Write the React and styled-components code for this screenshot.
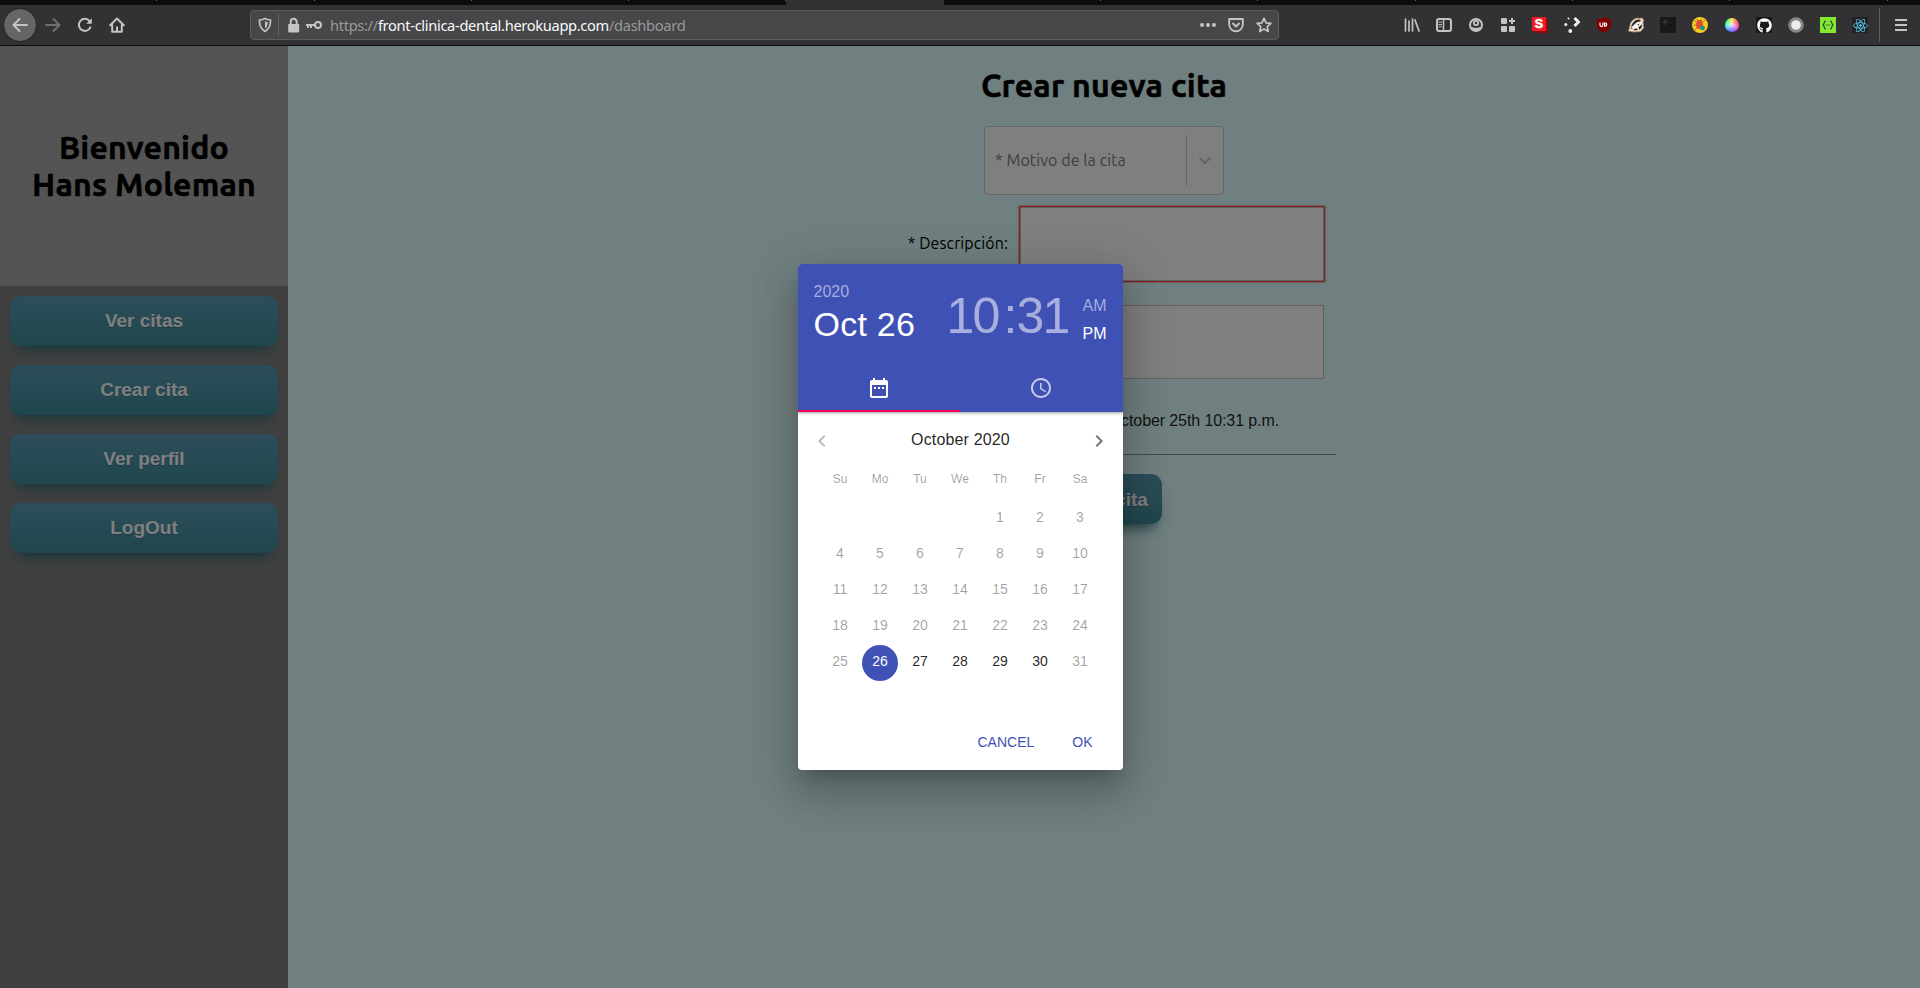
import React from "react";
import styled, { createGlobalStyle } from "styled-components";
import { FaGithub, FaReact } from "react-icons/fa";

const GlobalStyle = createGlobalStyle`
  *, *::before, *::after { box-sizing: border-box; }
  html, body { margin: 0; padding: 0; overflow: hidden; }
  button { border: 0; background: none; padding: 0; font: inherit; color: inherit; }
  svg { display: block; flex: none; }
`;

const ubuntu = `Ubuntu, "Noto Sans", "Open Sans", sans-serif`;
const helvetica = `"Liberation Sans", Arial, sans-serif`;

const Window = styled.div`
  display: flex;
  flex-direction: column;
  width: 1920px;
  height: 988px;
  overflow: hidden;
  font-family: ${ubuntu};
  color: #000;
`;

/* ---------- browser chrome ---------- */

const TabStrip = styled.div`
  display: flex;
  height: 5px;
  flex: none;
  background: #0c0c0d;
`;

const TabEdge = styled.div`
  width: 157.3px;
  flex: none;
  height: ${(p) => (p.$active ? 5 : 1)}px;
  background: ${(p) => (p.$active ? "#323234" : "transparent")};
  border-right: 1px solid ${(p) => (p.$active ? "#323234" : "#68686a")};
`;

const Toolbar = styled.div`
  display: flex;
  align-items: center;
  height: 41px;
  flex: none;
  background: #323234;
  border-bottom: 1px solid #0c0c0d;
  color: #c4c4c5;
`;

const NavGroup = styled.div`
  display: flex;
  width: 250px;
  padding-left: 4px;
`;

const NavButton = styled.button`
  display: grid;
  place-items: center;
  width: 32px;
  height: 32px;
  border-radius: 50%;
  background: ${(p) => (p.$filled ? "#666667" : "transparent")};
  color: ${(p) => (p.$dim ? "#707072" : "inherit")};
  outline: ${(p) => (p.$filled ? "1px solid #28282a" : "none")};
  margin-left: ${(p) => p.$gap || 0}px;
`;

const UrlBar = styled.div`
  display: flex;
  align-items: center;
  width: 1029px;
  height: 30px;
  padding: 0 6px;
  border: 1px solid #5c5c5e;
  border-radius: 4px;
  background: #474749;
`;

const UrlDivider = styled.span`
  width: 1px;
  height: 22px;
  margin: 0 6px 0 5px;
  background: #636365;
`;

const Url = styled.span`
  flex: 1;
  margin-left: 7px;
  font: 14.67px/20px "Noto Sans", sans-serif;
  letter-spacing: -0.33px;
  padding-bottom: 1px;
  color: #99999b;
  b { color: #f9f9fa; font-weight: 400; }
`;

const UrlActions = styled.div`
  display: flex;
  gap: 12px;
`;

const Extensions = styled.div`
  display: flex;
  gap: 16px;
  margin-left: auto;
  margin-right: 11px;
`;

const Extension = styled.span`
  display: grid;
  place-items: center;
  width: 16px;
  height: 16px;
  background: ${(p) => p.$bg || "transparent"};
  border-radius: ${(p) => p.$r || 0};
`;

const MenuArea = styled.div`
  display: flex;
  align-items: center;
  width: 41px;
  height: 34px;
  padding-left: 15px;
  border-left: 1px solid #5c5c5e;
`;

const KeyIcon = styled.svg`
  margin-left: 4px;
`;

const BadgeLetter = styled.text`
  font: 700 12.5px "Liberation Sans", sans-serif;
  fill: #fff;
  stroke: #fff;
  stroke-width: 0.5px;
  text-anchor: middle;
`;

function Glyph({ size = 16, children }) {
  return (
    <svg width={size} height={size} viewBox="0 0 16 16" fill="none" stroke="currentColor" strokeWidth="2" strokeLinecap="round" strokeLinejoin="round">
      {children}
    </svg>
  );
}

function BrowserChrome() {
  return (
    <>
      <TabStrip>
        {Array.from({ length: 12 }, (_, i) => (
          <TabEdge key={i} $active={i === 5} />
        ))}
      </TabStrip>
      <Toolbar>
        <NavGroup>
          <NavButton $filled>
            <Glyph><path d="M15 8H1.6M7.5 2L1.5 8l6 6" /></Glyph>
          </NavButton>
          <NavButton $dim $gap={1}>
            <Glyph><path d="M1 8h13.4M8.5 2l6 6-6 6" /></Glyph>
          </NavButton>
          <NavButton>
            <Glyph><path d="M13.4 10.3A6 6 0 1 1 12.5 4" /><path d="M14.8 1.2v5.6H9.2l5.6-5.6z" fill="currentColor" stroke="none" /></Glyph>
          </NavButton>
          <NavButton>
            <Glyph><path d="M1.2 8.3L8 1.5l6.8 6.8M3.2 8v6.8h9.6V8M8 11v3.5" /><path d="M7 9.5h2V15H7z" fill="currentColor" stroke="none" /></Glyph>
          </NavButton>
        </NavGroup>
        <UrlBar>
          <Glyph>
            <path d="M8 1.6c1.8 1 3.7 1.3 5.6 1.4 0 5.500-1.200 9-5.600 11.400C3.600 12 2.400 8.500 2.400 3c1.900-.1 3.800-.4 5.600-1.400z" strokeWidth="1.700" />
            <path d="M8 4.300v7.400c2-1.600 2.600-3.600 2.800-6.500A9 9 0 0 1 8 4.300z" fill="currentColor" stroke="none" />
          </Glyph>
          <UrlDivider />
          <Glyph>
            <rect x="3.200" y="7" width="11" height="8.500" rx="1" fill="currentColor" stroke="none" />
            <path d="M5.700 8V4.800a3 3 0 0 1 6 0V8" strokeLinecap="butt" />
          </Glyph>
          <KeyIcon width="18" height="16" viewBox="0 0 18 16" fill="none" stroke="currentColor" strokeWidth="2">
            <circle cx="13" cy="8" r="3" />
            <path d="M10 8H1M3 8v3M6 8v3" />
          </KeyIcon>
          <Url>https://<b>front-clinica-dental.herokuapp.com</b>/dashboard</Url>
          <UrlActions>
            <Glyph><g fill="currentColor" stroke="none"><circle cx="2" cy="8" r="2" /><circle cx="8" cy="8" r="2" /><circle cx="14" cy="8" r="2" /></g></Glyph>
            <Glyph><path d="M1.200 2h13.600v5.500a6.800 6.800 0 0 1-13.600 0z" strokeWidth="1.900" /><path d="M5 6.500l3 3 3-3" /></Glyph>
            <Glyph><path d="M8 1.300l2 4.500 4.900.5-3.700 3.300 1.100 4.900L8 12l-4.300 2.500 1.100-4.900L1.100 6.300 6 5.800z" strokeWidth="1.700" /></Glyph>
          </UrlActions>
        </UrlBar>
        <Extensions>
          <Extension><Glyph><path d="M1.500 2v12M5 4v10M8.500 2v12M11 3l4 11" strokeWidth="1.700" /></Glyph></Extension>
          <Extension><Glyph><rect x="1" y="2" width="14" height="12" rx="2" /><path d="M7.500 2v12" strokeWidth="1.500" /><path d="M3 5.200h2.500M3 7.500h2.500M3 9.800h2.500" strokeWidth="1" /></Glyph></Extension>
          <Extension><Glyph><circle cx="8" cy="8" r="6" /><circle cx="8" cy="6" r="2.200" strokeWidth="1.800" /><path d="M3.500 9.200c1.500 2.300 7.500 2.300 9 0-.5 5.800-8.500 5.800-9 0z" fill="currentColor" stroke="none" /></Glyph></Extension>
          <Extension><Glyph><g fill="currentColor" stroke="none"><rect x="1" y="1" width="6" height="6" rx="1" /><rect x="1" y="9" width="6" height="6" rx="1" /><rect x="9" y="9" width="6" height="6" rx="1" /></g><path d="M12 1v6M9 4h6" strokeLinecap="butt" /></Glyph></Extension>
          <Extension>
            <svg width="16" height="16" viewBox="0 0 16 16">
              <path d="M2 2h14v14H3l-2-2z" fill="#8f0a12" /><path d="M0 0h14v14H0z" fill="#ed1c24" />
              <BadgeLetter x="7" y="11.200">S</BadgeLetter>
            </svg>
          </Extension>
          <Extension>
            <svg width="16" height="16" viewBox="0 0 16 16" fill="#f2f2f2">
              <circle cx="4.500" cy="1.500" r="1" /><circle cx="1.800" cy="7.500" r="1.500" /><circle cx="6.300" cy="14" r="1.900" />
              <path d="M10.500 1l4 4-4 4" fill="none" stroke="#f2f2f2" strokeWidth="3" />
            </svg>
          </Extension>
          <Extension>
            <svg width="16" height="16" viewBox="0 0 16 16">
              <path d="M8 0c2 1.400 4 1.800 7 2v5c0 4.500-2 6.500-7 9-5-2.500-7-4.500-7-9V2c3-.2 5-.6 7-2z" fill="#800000" />
              <path d="M4 5.500v2.600a1.300 1.300 0 0 0 2.900 0V5.500M8.600 6v3.100h.9a1.600 1.600 0 0 0 0-3.100z" fill="none" stroke="#fff" strokeWidth="1.200" />
            </svg>
          </Extension>
          <Extension>
            <svg width="16" height="16" viewBox="0 0 16 16">
              <path d="M.5 14l1-3 1-5 3-3.500 3.500-1.500 2 .5 3-.5 1.500 2-.5 3 .5 5-3 3.500L6 15z" fill="#efe0d2" stroke="#c08a5e" strokeWidth=".8" />
              <path d="M4 7l3-3.500 3-1 3 .5-1 1.500-3 .5-3 2.500-3 3zM10.500 10l3.500-2.500-.5 3-2 2.500zM5 13l3-1.500 2 .5-2 1.500zM2.500 12l1-1.500 1 1z" fill="#242424" />
              <path d="M4.500 11l5-4.500L13 5.500 11.500 9 7 11z" fill="#fff" />
              <path d="M9 8l2.500-1.400-.8 2z" fill="#242424" />
            </svg>
          </Extension>
          <Extension $bg="#19191a" $r="1px"><Glyph><path d="M5 2.500v5M2.500 5h5" stroke="#343436" strokeWidth="1.500" /></Glyph></Extension>
          <Extension>
            <svg width="16" height="16" viewBox="0 0 16 16">
              <circle cx="8" cy="8" r="8" fill="#f8ca20" />
              <path d="M4 5L2.500 3.500M4 8H2M5 11l-2 2M11 5l2-2M6 4L5 2M9 4l1-2" stroke="#9a6a22" strokeWidth=".9" />
              <ellipse cx="7.500" cy="7.500" rx="3.500" ry="4.500" fill="#e14a35" />
              <circle cx="10.500" cy="11" r="2.400" fill="#199a7c" />
            </svg>
          </Extension>
          <Extension><ColorWheel /></Extension>
          <Extension $bg="#18181a"><FaGithub size={15} color="#fff" /></Extension>
          <Extension><Glyph><circle cx="8" cy="8" r="6.300" fill="#ececec" stroke="#858585" strokeWidth="2.900" /></Glyph></Extension>
          <Extension $bg="#85ea2d">
            <Glyph><path d="M5.500 4C3.800 4 4.600 7.500 3 8c1.600.5.800 4 2.500 4M10.500 4c1.700 0 .9 3.500 2.500 4-1.600.5-.8 4-2.500 4M6.300 8h.1M8 8h.1M9.700 8h.1" stroke="#173647" strokeWidth="1.100" /></Glyph>
          </Extension>
          <Extension $bg="#20232a"><FaReact size={15} color="#5fd3f3" /></Extension>
        </Extensions>
        <MenuArea>
          <svg width="12" height="14" viewBox="0 0 12 14" stroke="currentColor" strokeWidth="2"><path d="M0 2h12M0 7h12M0 12h12" /></svg>
        </MenuArea>
      </Toolbar>
    </>
  );
}

const ColorWheel = styled.i`
  width: 14px;
  height: 14px;
  border-radius: 50%;
  background: radial-gradient(circle, #fffc 0, #fff0 65%),
    conic-gradient(#f8e34d, #ff5a4d, #ff4db8, #a04dff, #4d7cff, #4de6ff, #4dff6a, #f8e34d);
`;

/* ---------- dashboard page ---------- */

const Page = styled.div`
  position: relative;
  display: flex;
  flex: 1;
  background: #e0ffff;
`;

const Sidebar = styled.aside`
  width: 288px;
  background: #808080;
`;

const Welcome = styled.header`
  display: flex;
  align-items: center;
  justify-content: center;
  height: 240px;
  background: #a9a9a9;
`;

const Heading = styled.h1`
  margin: 0;
  font: 700 32px/37px ${ubuntu};
  letter-spacing: 0.2px;
  -webkit-text-stroke: 0.5px #000;
  text-align: center;
`;

const Menu = styled.nav`
  display: flex;
  flex-direction: column;
  gap: 19px;
  padding: 10px;
`;

const ActionButton = styled.button`
  height: 50px;
  padding: 0 14px;
  border-radius: 11px;
  background: linear-gradient(to bottom, #599bb3 5%, #408c99 100%);
  box-shadow: 0 10px 14px -7px #276873;
  color: #fff;
  font: 700 19px/24px ${helvetica};
  text-shadow: 0 1px 0 #3d768a;
  white-space: nowrap;
`;

const SubmitButton = styled(ActionButton)`
  margin-top: 19px;
  padding-top: 1px;
`;

const Main = styled.main`
  display: flex;
  flex: 1;
  flex-direction: column;
  align-items: center;
  padding-top: 21px;
`;

const Select = styled.div`
  display: flex;
  align-items: center;
  width: 240px;
  height: 69px;
  margin-top: 22px;
  padding-left: 10px;
  border: 1px solid #ccc;
  border-radius: 4px;
  background: #fff;
  color: #808080;
  font-size: 16px;
`;

const SelectText = styled.span`
  flex: 1;
  padding-bottom: 2px;
  letter-spacing: 0.08px;
`;

const SelectArrow = styled.span`
  display: grid;
  place-items: center;
  width: 37px;
  height: 51px;
  border-left: 1px solid #ccc;
  padding-bottom: 1px;
  color: #ccc;
`;

const Fields = styled.div`
  width: 464px;
  display: flex;
  flex-direction: column;
  align-items: center;
`;

const FieldRow = styled.div`
  display: flex;
  align-items: center;
  justify-content: flex-end;
  gap: 12px;
  width: 100%;
  margin-top: ${(p) => p.$top}px;
  padding-right: ${(p) => p.$inset}px;
`;

const Label = styled.label`
  padding-bottom: 2px;
  font-size: 16px;
  line-height: 20px;
  letter-spacing: 0.1px;
  white-space: nowrap;
`;

const TextBox = styled.textarea`
  display: block;
  width: 304px;
  height: 74px;
  border: 1px solid #ccc0b8;
  background: #fff;
  resize: none;
  outline: 0;
  box-shadow: ${(p) => (p.$invalid ? "0 0 1.5px 1px #f00" : "none")};
`;

const DateField = styled.div`
  width: 100%;
  height: 45px;
  margin-top: 31px;
  padding: 1px 57px 0 0;
  border-bottom: 1px solid rgba(0, 0, 0, 0.42);
  color: rgba(0, 0, 0, 0.87);
  font: 16px/19px ${helvetica};
  letter-spacing: -0.1px;
  text-align: right;
`;

/* ---------- date and time dialog ---------- */

const Backdrop = styled.div`
  position: absolute;
  inset: 0;
  display: grid;
  place-items: center;
  background: rgba(0, 0, 0, 0.5);
`;

const Dialog = styled.section`
  display: flex;
  flex-direction: column;
  width: 325px;
  height: 506px;
  border-radius: 4px;
  overflow: hidden;
  background: #fff;
  font-family: ${helvetica};
  box-shadow: 0 11px 15px -7px rgba(0, 0, 0, 0.2), 0 24px 38px 3px rgba(0, 0, 0, 0.14),
    0 9px 46px 8px rgba(0, 0, 0, 0.12);
`;

const DialogTop = styled.header`
  height: 148px;
  flex: none;
  background: #3f51b5;
  color: #fff;
  box-shadow: 0 1px 3px rgba(0, 0, 0, 0.4);
`;

const Summary = styled.div`
  display: flex;
  justify-content: space-between;
  height: 100px;
  padding: 16px 16px 0;
`;

const DateSummary = styled.div`
  display: flex;
  flex-direction: column;
`;

const Year = styled.span`
  font-size: 16px;
  line-height: 24px;
  color: rgba(255, 255, 255, 0.54);
`;

const DayTitle = styled.span`
  font-size: 34px;
  line-height: 40px;
  letter-spacing: 0.25px;
`;

const TimeSummary = styled.div`
  display: flex;
  align-items: flex-start;
`;

const Time = styled.span`
  display: flex;
  font-size: 50px;
  line-height: 50px;
  letter-spacing: -1.8px;
  margin-top: 11px;
  color: rgba(255, 255, 255, 0.54);
  i { font-style: normal; margin: 0 1px 0 5px; }
`;

const Meridiem = styled.div`
  display: flex;
  flex-direction: column;
  margin: 12px 0 0 14px;
  font-size: 16px;
  line-height: 28px;
`;

const MeridiemLabel = styled.span`
  color: ${(p) => (p.$on ? "#fff" : "rgba(255, 255, 255, 0.54)")};
`;

const Tabs = styled.div`
  display: flex;
  height: 48px;
`;

const Tab = styled.button`
  display: grid;
  place-items: center;
  flex: 1;
  padding-top: 2px;
  border-bottom: 2px solid ${(p) => (p.$on ? "#f50057" : "transparent")};
  color: ${(p) => (p.$on ? "#fff" : "rgba(255, 255, 255, 0.7)")};
`;

const Calendar = styled.div`
  height: 305px;
  flex: none;
`;

const MonthBar = styled.div`
  display: flex;
  align-items: center;
  justify-content: space-between;
  height: 56px;
  padding: 2px 11px 0 12px;
  font-size: 16px;
  line-height: 24px;
  letter-spacing: 0.15px;
  color: rgba(0, 0, 0, 0.87);
`;

const MonthName = styled.span`
  padding-bottom: 2px;
`;

const MonthArrow = styled.button`
  color: ${(p) => (p.$disabled ? "rgba(0, 0, 0, 0.26)" : "rgba(0, 0, 0, 0.54)")};
`;

const DayGrid = styled.div`
  display: grid;
  grid-template-columns: repeat(7, 40px);
  grid-auto-rows: 36px;
  justify-content: center;
  justify-items: center;
`;

const Weekdays = styled(DayGrid)`
  grid-auto-rows: 22px;
  margin-bottom: 11px;
  font-size: 12px;
  line-height: 22px;
  color: rgba(0, 0, 0, 0.38);
`;

const Day = styled.button`
  width: 36px;
  height: 36px;
  padding-bottom: 4px;
  border-radius: 50%;
  font-size: 14px;
  text-align: center;
  background: ${(p) => (p.$selected ? "#3f51b5" : "transparent")};
  color: ${(p) => (p.$selected ? "#fff" : p.$open ? "rgba(0, 0, 0, 0.87)" : "rgba(0, 0, 0, 0.38)")};
`;

const DialogActions = styled.footer`
  display: flex;
  justify-content: flex-end;
  gap: 38px;
  padding: 15px 30px 0 0;
  font-size: 14px;
  line-height: 20px;
  letter-spacing: 0.25px;
  color: #3f51b5;
`;

const MuiIcon = ({ children }) => (
  <svg width="24" height="24" viewBox="0 0 24 24" fill="currentColor">{children}</svg>
);

const weekdays = ["Su", "Mo", "Tu", "We", "Th", "Fr", "Sa"];
const days = Array.from({ length: 31 }, (_, i) => i + 1);

function DateTimeDialog() {
  return (
    <Dialog>
      <DialogTop>
        <Summary>
          <DateSummary>
            <Year>2020</Year>
            <DayTitle>Oct 26</DayTitle>
          </DateSummary>
          <TimeSummary>
            <Time>10<i>:</i>31</Time>
            <Meridiem>
              <MeridiemLabel>AM</MeridiemLabel>
              <MeridiemLabel $on>PM</MeridiemLabel>
            </Meridiem>
          </TimeSummary>
        </Summary>
        <Tabs>
          <Tab $on>
            <MuiIcon><path d="M9 11H7v2h2v-2zm4 0h-2v2h2v-2zm4 0h-2v2h2v-2zm2-7h-1V2h-2v2H8V2H6v2H5c-1.110 0-1.990.9-1.990 2L3 20c0 1.100.89 2 2 2h14c1.100 0 2-.9 2-2V6c0-1.100-.9-2-2-2zm0 16H5V9h14v11z" /></MuiIcon>
          </Tab>
          <Tab>
            <MuiIcon>
              <path d="M11.990 2C6.470 2 2 6.480 2 12s4.470 10 9.990 10C17.520 22 22 17.520 22 12S17.520 2 11.990 2zM12 20c-4.420 0-8-3.580-8-8s3.580-8 8-8 8 3.580 8 8-3.580 8-8 8z" />
              <path d="M12.500 7H11v6l5.250 3.150.75-1.230-4.500-2.670z" />
            </MuiIcon>
          </Tab>
        </Tabs>
      </DialogTop>
      <Calendar>
        <MonthBar>
          <MonthArrow $disabled><MuiIcon><path d="M15.410 16.590L10.830 12l4.580-4.590L14 6l-6 6 6 6 1.410-1.410z" /></MuiIcon></MonthArrow>
          <MonthName>October 2020</MonthName>
          <MonthArrow><MuiIcon><path d="M8.590 16.590L13.170 12 8.590 7.410 10 6l6 6-6 6-1.410-1.410z" /></MuiIcon></MonthArrow>
        </MonthBar>
        <Weekdays>{weekdays.map((d) => <span key={d}>{d}</span>)}</Weekdays>
        <DayGrid>
          {[0, 1, 2, 3].map((n) => <span key={`blank${n}`} />)}
          {days.map((n) => (
            <Day key={n} $selected={n === 26} $open={n > 26 && n < 31}>{n}</Day>
          ))}
        </DayGrid>
      </Calendar>
      <DialogActions>
        <button>CANCEL</button>
        <button>OK</button>
      </DialogActions>
    </Dialog>
  );
}

export default function App() {
  return (
    <Window>
      <GlobalStyle />
      <BrowserChrome />
      <Page>
        <Sidebar>
          <Welcome>
            <Heading>Bienvenido<br />Hans Moleman</Heading>
          </Welcome>
          <Menu>
            <ActionButton>Ver citas</ActionButton>
            <ActionButton>Crear cita</ActionButton>
            <ActionButton>Ver perfil</ActionButton>
            <ActionButton>LogOut</ActionButton>
          </Menu>
        </Sidebar>
        <Main>
          <Heading>Crear nueva cita</Heading>
          <Select>
            <SelectText>* Motivo de la cita</SelectText>
            <SelectArrow>
              <svg width="20" height="20" viewBox="0 0 20 20" fill="currentColor">
                <path d="M4.516 7.548c0.436-0.446 1.043-0.481 1.576 0l3.908 3.747 3.908-3.747c0.533-0.481 1.141-0.446 1.574 0 0.436 0.445 0.408 1.197 0 1.615-0.406 0.418-4.695 4.502-4.695 4.502-0.217 0.223-0.502 0.335-0.787 0.335s-0.570-0.112-0.789-0.335c0 0-4.287-4.084-4.695-4.502s-0.436-1.170 0-1.615z" />
              </svg>
            </SelectArrow>
          </Select>
          <Fields>
            <FieldRow $top={12} $inset={12}>
              <Label>* Descripción:</Label>
              <TextBox $invalid />
            </FieldRow>
            <FieldRow $top={24} $inset={12}>
              <TextBox />
            </FieldRow>
            <DateField>October 25th 10:31 p.m.</DateField>
            <SubmitButton>Crear cita</SubmitButton>
          </Fields>
        </Main>
        <Backdrop>
          <DateTimeDialog />
        </Backdrop>
      </Page>
    </Window>
  );
}
